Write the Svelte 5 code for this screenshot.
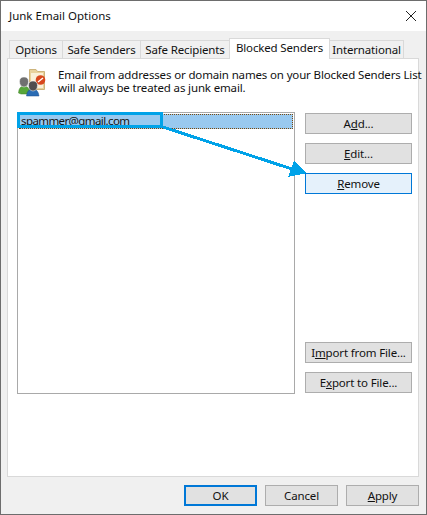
<script>
  const tabs = [
    { label: 'Options', width: 54 },
    { label: 'Safe Senders', width: 79 },
    { label: 'Safe Recipients', width: 90 },
    { label: 'Blocked Senders', width: 101, active: true },
    { label: 'International', width: 75 },
  ];
</script>

<div class="dialog">
  <header class="titlebar">
    <span>Junk Email Options</span>
    <svg class="close" width="12" height="12" viewBox="0 0 12 12">
      <path d="M1 1 L11 11 M11 1 L1 11" stroke="#222" stroke-width="1" fill="none" />
    </svg>
  </header>

  <div class="body">
    <div class="tabs">
      {#each tabs as tab}
        <div class="tab" class:active={tab.active} style="width: {tab.width}px">{tab.label}</div>
      {/each}
    </div>

    <section class="panel">
      <div class="intro">
        <svg class="intro-icon" width="28" height="29" viewBox="0 0 28 29">
          <path d="M11.5 1.5 H18 L19.5 3.5 H26.5 V21.5 H11.5 Z" fill="#e8d29c" stroke="#cdb47c" />
          <path d="M13 5 H25 V20 H13 Z" fill="#f9f0d8" />
          <circle cx="22.5" cy="12" r="4.8" fill="#d8471d" />
          <path d="M20 14 L25 10" stroke="#fff" stroke-width="1.4" />
          <path d="M0.5 25 Q1 18 6 18 Q11 18 12.5 25 L9 26 H3 Z" fill="#57a63a" stroke="#3f8227" stroke-width="0.5" />
          <path d="M1.5 13.5 Q1.5 9 6 9 Q10.5 9 10.5 13.5 Q10.5 18.5 6 19 Q1.5 18.5 1.5 13.5 Z" fill="#707070" stroke="#fff" stroke-width="0.5" />
          <path d="M8.5 28 Q9 21 15 21 Q20 21 21 28 Z" fill="#2a6cb4" stroke="#1d4f8c" stroke-width="0.5" />
          <path d="M10.5 17.5 Q10.5 13 15 13 Q19.5 13 19.5 17.5 Q19.5 22.5 15 23 Q10.5 22.5 10.5 17.5 Z" fill="#4f4f4f" stroke="#fff" stroke-width="0.5" />
        </svg>
        <p>Email from addresses or domain names on your Blocked Senders List<br />will always be treated as junk email.</p>
      </div>

      <div class="content">
        <div class="list">
          <div class="row"><span class="row-text">spammer@gmail.com</span></div>
        </div>
        <div class="side">
          <div class="group">
            <button><span>A<u>d</u>d...</span></button>
            <button><span><u>E</u>dit...</span></button>
            <button class="hover"><span><u>R</u>emove</span></button>
          </div>
          <div class="group">
            <button><span>I<u>m</u>port from File...</span></button>
            <button><span>E<u>x</u>port to File...</span></button>
          </div>
        </div>
      </div>
    </section>

    <footer class="actions">
      <button class="default">OK</button>
      <button>Cancel</button>
      <button><u>A</u>pply</button>
    </footer>
  </div>

  <!-- annotation drawn over the dialog -->
  <div class="callout"></div>
  <svg class="arrow" width="427" height="515" viewBox="0 0 427 515" shape-rendering="crispEdges">
    <path d="M163 127 L292 169" stroke="#00a2e8" stroke-width="3" fill="none" />
    <path d="M294 161 L307 173 L288 177 Z" fill="#00a2e8" />
  </svg>
</div>

<style>
  :global(body) {
    margin: 0;
  }
  .dialog {
    position: relative;
    box-sizing: border-box;
    width: 427px;
    height: 515px;
    border: 1px solid #6d6d6d;
    background: #f0f0f0;
    font-family: "Noto Sans", sans-serif;
    font-size: 11.5px;
    letter-spacing: -0.15px;
    color: #111;
    display: flex;
    flex-direction: column;
    overflow: hidden;
  }
  .titlebar {
    height: 30px;
    flex: none;
    background: #fff;
    display: flex;
    align-items: center;
    justify-content: space-between;
    padding: 0 9px 0 8px;
    letter-spacing: 0;
  }
  .titlebar span {
    padding-bottom: 2px;
  }
  .body {
    flex: 1;
    display: flex;
    flex-direction: column;
    padding: 9px 7px 0 6px;
  }
  .tabs {
    display: flex;
    height: 18px;
    padding-left: 2px;
  }
  .tab {
    box-sizing: border-box;
    height: 19px;
    margin-left: -1px;
    border: 1px solid #d9d9d9;
    border-bottom: none;
    background: #f0f0f0;
    text-align: center;
    line-height: 17px;
  }
  .tab:first-child {
    margin-left: 0;
  }
  .tab.active {
    height: 21px;
    margin-top: -2px;
    background: #fff;
    position: relative;
    z-index: 1;
    line-height: 17px;
  }
  .panel {
    box-sizing: border-box;
    height: 419px;
    border: 1px solid #d9d9d9;
    background: #fff;
    padding: 6px 6px 0 9px;
    display: flex;
    flex-direction: column;
  }
  .intro {
    display: flex;
    gap: 12px;
    height: 47px;
    padding-left: 1px;
  }
  .intro-icon {
    flex: none;
    margin-top: 3px;
  }
  .intro p {
    margin: 0;
    white-space: nowrap;
    line-height: 13px;
    padding-top: 3px;
  }
  .content {
    display: flex;
    justify-content: space-between;
  }
  .list {
    box-sizing: border-box;
    width: 278px;
    height: 282px;
    border: 1px solid #a9a9a9;
    padding: 1px;
  }
  .row {
    height: 15px;
    background: #99c9ef;
    outline: 1px dotted #7a4a10;
    outline-offset: -1px;
    line-height: 14px;
    padding-left: 2px;
    letter-spacing: -0.6px;
  }
  .side {
    width: 107px;
    height: 281px;
    display: flex;
    flex-direction: column;
    justify-content: space-between;
  }
  .group {
    display: flex;
    flex-direction: column;
    gap: 9px;
  }
  .group:first-child {
    margin-top: 1px;
  }
  button {
    box-sizing: border-box;
    height: 21px;
    width: 100%;
    padding: 0;
    border: 1px solid #adadad;
    background: #e1e1e1;
    font: inherit;
    letter-spacing: inherit;
    color: inherit;
  }
  button.hover {
    border-color: #0078d7;
    background: #e5f1fb;
  }
  .actions {
    display: flex;
    justify-content: flex-end;
    gap: 8px;
    margin-top: 8px;
  }
  .actions button {
    width: 73px;
  }
  button.default {
    border: 2px solid #0078d7;
  }
  .callout {
    position: absolute;
    left: 16px;
    top: 111px;
    width: 140px;
    height: 10px;
    border: 3px solid #00a2e8;
  }
  .arrow {
    position: absolute;
    left: -1px;
    top: -1px;
    pointer-events: none;
  }
</style>
